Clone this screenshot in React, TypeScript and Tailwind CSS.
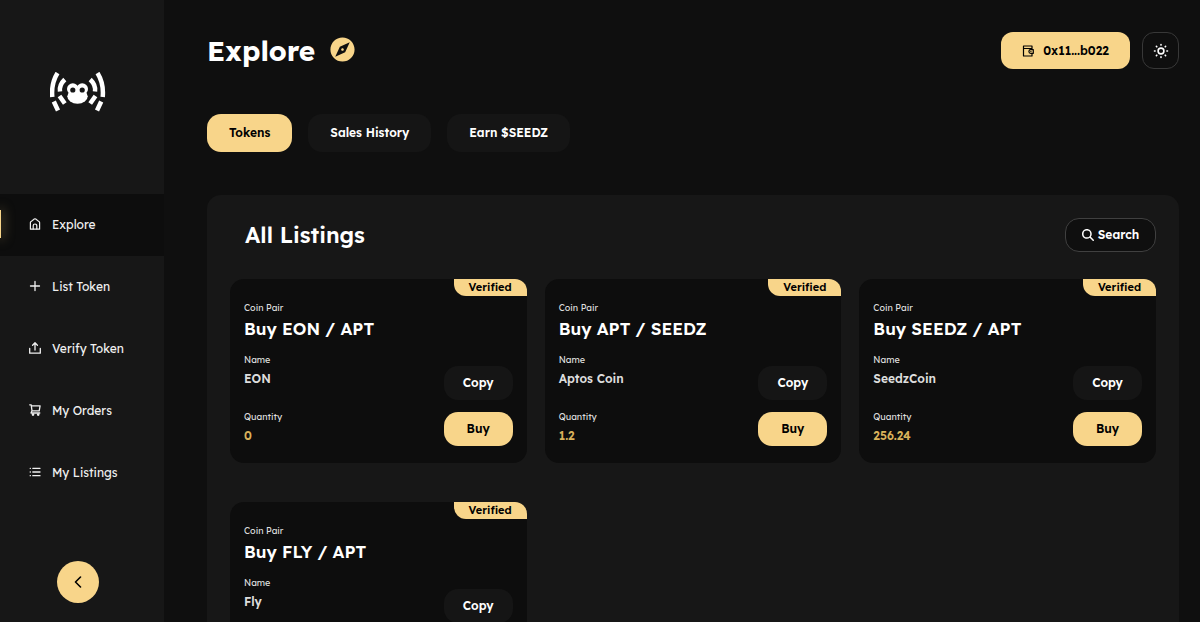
import type { ReactNode } from "react";
import { MdExplore } from "react-icons/md";
import { FaMagnifyingGlass } from "react-icons/fa6";

const stroke = {
  fill: "none",
  stroke: "currentColor",
  strokeLinecap: "round" as const,
  strokeLinejoin: "round" as const,
};

function Logo() {
  return (
    <svg viewBox="0 0 56 40" className="h-10 w-14" role="img" aria-label="Logo">
      <g fill="none" stroke="#fff" strokeWidth="4.500">
        <path d="M7.500 1Q1 11.500 2.300 25M3.800 29.500L8 38.500" />
        <path d="M47.500 1Q54 11.500 52.700 25M51.200 29.500L47 38.500" />
      </g>
      <g fill="none" stroke="#fff" strokeWidth="4.500">
        <path d="M14.800 7.500Q9 13 10 19.500M9.500 24L14.800 31.500" />
        <path d="M40.200 7.500Q46 13 45 19.500M45.500 24L40.200 31.500" />
      </g>
      <g fill="#fff">
        <circle cx="22.800" cy="17" r="5.800" />
        <circle cx="32.200" cy="17" r="5.800" />
        <ellipse cx="27.500" cy="24.300" rx="10.200" ry="7.500" />
      </g>
      <circle cx="22.800" cy="18" r="2.600" fill="#171717" />
      <circle cx="32.200" cy="18" r="2.600" fill="#171717" />
    </svg>
  );
}

function HomeIcon() {
  return (
    <svg viewBox="0 0 12 12" className="size-3" {...stroke} strokeWidth="1.200">
      <path d="M1.400 4.600Q1.400 4 2 3.600L5.300 1Q6 .5 6.700 1L10 3.600Q10.600 4 10.600 4.600V11.200H1.400z" />
      <path d="M4.200 11V7.800a1.800 1.800 0 0 1 3.600 0V11" />
    </svg>
  );
}

function PlusIcon() {
  return (
    <svg viewBox="0 0 12 12" className="size-3" {...stroke} strokeWidth="1.300">
      <path d="M6 1.500v9M1.500 6h9" />
    </svg>
  );
}

function UploadIcon() {
  return (
    <svg viewBox="0 0 12 12" className="size-3" {...stroke} strokeWidth="1.300">
      <path d="M.7 6.500v4.700h10.600V6.500M6 8V1M3.600 3.200L6 .8l2.400 2.400" />
    </svg>
  );
}

function CartIcon() {
  return (
    <svg viewBox="0 0 12 12" className="size-3" {...stroke} strokeWidth="1.300">
      <path d="M.7.800h1.500l.8 6h7.200l.9-5H2.400M3 6.800L2 9h8.800" />
      <circle cx="4" cy="10.600" r=".7" />
      <circle cx="9.200" cy="10.600" r=".7" />
    </svg>
  );
}

function ListIcon() {
  return (
    <svg viewBox="0 0 12 12" className="size-3" {...stroke} strokeWidth="1.300">
      <path d="M3.800 2.300h7.200M3.800 6h7.200M3.800 9.700h7.200M1.200 2.300h.2M1.200 6h.2M1.200 9.700h.2" />
    </svg>
  );
}

function WalletIcon() {
  return (
    <svg viewBox="0 0 12 12" className="size-3" {...stroke} strokeWidth="1.200">
      <path d="M10 3.800V1H1.500v10H10V9.200M1.500 3.500H10" />
      <path d="M11.300 4.700H8.700a1.800 1.800 0 0 0 0 3.600h2.600z" />
      <path d="M8.800 6.500h.2" />
    </svg>
  );
}

function SunIcon() {
  return (
    <svg viewBox="0 0 16 16" className="size-4" {...stroke} strokeWidth="1.600">
      <circle cx="8" cy="8" r="2.900" />
      <path d="M8 1.500v.6M8 13.900v.6M1.500 8h.6M13.900 8h.6M3.400 3.400l.4.4M12.200 12.200l.4.4M3.400 12.600l.4-.4M12.200 3.800l.4-.4" />
    </svg>
  );
}

const nav: { label: string; icon: ReactNode }[] = [
  { label: "Explore", icon: <HomeIcon /> },
  { label: "List Token", icon: <PlusIcon /> },
  { label: "Verify Token", icon: <UploadIcon /> },
  { label: "My Orders", icon: <CartIcon /> },
  { label: "My Listings", icon: <ListIcon /> },
];

const tabs = ["Tokens", "Sales History", "Earn $SEEDZ"];

const listings = [
  { pair: "Buy EON / APT", name: "EON", quantity: "0" },
  { pair: "Buy APT / SEEDZ", name: "Aptos Coin", quantity: "1.2" },
  { pair: "Buy SEEDZ / APT", name: "SeedzCoin", quantity: "256.24" },
  { pair: "Buy FLY / APT", name: "Fly", quantity: "10" },
];

function Sidebar() {
  return (
    <aside className="sticky top-0 flex h-screen w-41 shrink-0 flex-col bg-[#171717]">
      <div className="flex justify-center pt-[72px] pr-[9px] pb-[82px]">
        <Logo />
      </div>
      <nav aria-label="Main">
        {nav.map(({ label, icon }, i) => (
          <a
            key={label}
            href="#"
            aria-current={i === 0 ? "page" : undefined}
            className={
              i === 0
                ? "relative flex h-[62px] items-center gap-[11px] overflow-hidden bg-[#0d0d0d] pl-[29px] text-xs text-[#f0f0f0]"
                : "flex h-[62px] items-center gap-[11px] pl-[29px] text-xs text-[#f0f0f0]"
            }
          >
            {i === 0 && (
              <span className="absolute top-4 left-0 h-7 w-px bg-[#f8d58a] shadow-[0_0_12px_1px_#f8d58a80]" />
            )}
            <span className="pb-0.5">{icon}</span>
            {label}
          </a>
        ))}
      </nav>
      <div className="mt-auto flex justify-center pr-[9px] pb-[19px]">
        <button
          aria-label="Collapse sidebar"
          className="flex size-[42px] items-center justify-center rounded-full bg-[#f8d58a] text-black"
        >
          <svg viewBox="0 0 12 12" className="size-3" {...stroke} strokeWidth="1.600">
            <path d="M8.500 1L3.500 6l5 5" />
          </svg>
        </button>
      </div>
    </aside>
  );
}

function ListingCard({ pair, name, quantity }: (typeof listings)[number]) {
  return (
    <article className="relative flex h-[184px] items-end justify-between rounded-[14px] bg-[#0d0d0d] pr-[14px] pb-[17px] pl-[14px]">
      <span className="absolute top-0 right-0 flex h-[17px] w-[73px] items-center justify-center rounded-tr-xl rounded-bl-xl bg-[#f8d58a] text-[11px] font-semibold text-black">
        Verified
      </span>
      <dl className="flex flex-col pb-0.5">
        <dt className="text-[9px] leading-3 text-[#dddddd]">Coin Pair</dt>
        <dd className="mt-[3px] text-[17px] leading-6 font-semibold whitespace-nowrap text-white">{pair}</dd>
        <dt className="mt-[13px] text-[9px] leading-3 text-[#dddddd]">Name</dt>
        <dd className="mt-[5px] text-xs leading-4 font-semibold text-[#dddddd]">{name}</dd>
        <dt className="mt-6 text-[9px] leading-3 text-[#dddddd]">Quantity</dt>
        <dd className="mt-[5px] text-xs leading-4 font-semibold text-[#d9b25b]">{quantity}</dd>
      </dl>
      <div className="flex flex-col gap-3">
        <button className="h-[34px] w-[69px] rounded-[14px] bg-[#151515] text-xs font-semibold text-white">
          Copy
        </button>
        <button className="h-[34px] w-[69px] rounded-[14px] bg-[#f8d58a] text-xs font-semibold text-black">
          Buy
        </button>
      </div>
    </article>
  );
}

export default function App() {
  return (
    <div className="flex min-h-screen bg-[#0f0f0f] font-['Lexend','Inter',sans-serif] text-white">
      <Sidebar />
      <main className="min-w-0 flex-1 pt-8 pr-[21px] pb-10 pl-[43px]">
        <header className="flex h-[37px] items-center justify-between">
          <div className="flex items-center gap-[13px]">
            <h1 className="text-[28px] leading-9 font-bold">Explore</h1>
            <MdExplore className="mb-0.5 size-[29px] text-[#f8d58a]" />
          </div>
          <div className="flex gap-3">
            <button className="flex h-[37px] w-[129px] items-center justify-center gap-[9px] rounded-xl bg-[#f8d58a] text-xs font-semibold text-black">
              <WalletIcon />
              0x11...b022
            </button>
            <button
              aria-label="Toggle theme"
              className="flex size-[37px] items-center justify-center rounded-xl border border-[#383838]"
            >
              <SunIcon />
            </button>
          </div>
        </header>

        <div className="mt-[45px] flex gap-4" role="tablist">
          {tabs.map((tab, i) => (
            <button
              key={tab}
              role="tab"
              aria-selected={i === 0}
              className={
                i === 0
                  ? "h-[38px] rounded-[14px] bg-[#f8d58a] px-[22px] text-xs font-semibold text-black"
                  : "h-[38px] rounded-[14px] bg-[#151515] px-[22px] text-xs font-semibold text-white"
              }
            >
              {tab}
            </button>
          ))}
        </div>

        <section className="mt-[43px] rounded-[14px] bg-[#171717] p-[23px]">
          <div className="flex items-center justify-between pl-[15px]">
            <h2 className="text-[22px] leading-8 font-semibold">All Listings</h2>
            <button className="flex h-[34px] w-[91px] items-center justify-center gap-1 rounded-[14px] border border-[#404040] bg-[#0f0f0f] text-xs font-semibold">
              <FaMagnifyingGlass className="size-3" />
              Search
            </button>
          </div>
          <div className="mt-[27px] grid grid-cols-3 gap-x-[18px] gap-y-[39px]">
            {listings.map((listing) => (
              <ListingCard key={listing.pair} {...listing} />
            ))}
          </div>
        </section>
      </main>
    </div>
  );
}
